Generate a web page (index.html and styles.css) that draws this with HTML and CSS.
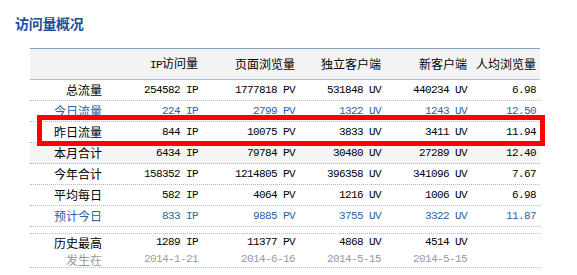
FILE: index.html
```html
<!DOCTYPE html>
<html lang="zh">
<head>
<meta charset="utf-8">
<title>访问量概况</title>
<link rel="stylesheet" href="styles.css">
</head>
<body>
<div class="page">
  <h2 class="title">访问量概况</h2>
  <div class="stats">
    <div class="row head">
      <div class="c"></div>
      <div class="c"><span class="m">IP</span>访问量</div>
      <div class="c">页面浏览量</div>
      <div class="c">独立客户端</div>
      <div class="c">新客户端</div>
      <div class="c">人均浏览量</div>
    </div>
    <div class="row">
      <div class="c lab">总流量</div>
      <div class="c m">254582 IP</div>
      <div class="c m">1777818 PV</div>
      <div class="c m">531848 UV</div>
      <div class="c m">440234 UV</div>
      <div class="c m">6.98</div>
    </div>
    <div class="row blue">
      <div class="c lab">今日流量</div>
      <div class="c m">224 IP</div>
      <div class="c m">2799 PV</div>
      <div class="c m">1322 UV</div>
      <div class="c m">1243 UV</div>
      <div class="c m">12.50</div>
    </div>
    <div class="row">
      <div class="c lab">昨日流量</div>
      <div class="c m">844 IP</div>
      <div class="c m">10075 PV</div>
      <div class="c m">3833 UV</div>
      <div class="c m">3411 UV</div>
      <div class="c m">11.94</div>
    </div>
    <div class="row shade">
      <div class="c lab">本月合计</div>
      <div class="c m">6434 IP</div>
      <div class="c m">79784 PV</div>
      <div class="c m">30480 UV</div>
      <div class="c m">27289 UV</div>
      <div class="c m">12.40</div>
    </div>
    <div class="row">
      <div class="c lab">今年合计</div>
      <div class="c m">158352 IP</div>
      <div class="c m">1214805 PV</div>
      <div class="c m">396358 UV</div>
      <div class="c m">341096 UV</div>
      <div class="c m">7.67</div>
    </div>
    <div class="row">
      <div class="c lab">平均每日</div>
      <div class="c m">582 IP</div>
      <div class="c m">4064 PV</div>
      <div class="c m">1216 UV</div>
      <div class="c m">1006 UV</div>
      <div class="c m">6.98</div>
    </div>
    <div class="row blue">
      <div class="c lab">预计今日</div>
      <div class="c m">833 IP</div>
      <div class="c m">9885 PV</div>
      <div class="c m">3755 UV</div>
      <div class="c m">3322 UV</div>
      <div class="c m">11.87</div>
    </div>
    <div class="row spacer"></div>
    <div class="row peak">
      <div class="c lab"><div>历史最高</div><div class="gray">发生在</div></div>
      <div class="c m"><div>1289 IP</div><div class="gray">2014-1-21</div></div>
      <div class="c m"><div>11377 PV</div><div class="gray">2014-6-16</div></div>
      <div class="c m"><div>4868 UV</div><div class="gray">2014-5-15</div></div>
      <div class="c m"><div>4514 UV</div><div class="gray">2014-5-15</div></div>
      <div class="c m"></div>
    </div>
    <div class="mark"></div>
  </div>
</div>
</body>
</html>
```

FILE: styles.css
```css
html, body {
  margin: 0;
  padding: 0;
  background: #fff;
}
body {
  font-family: "Noto Sans CJK SC", "Liberation Sans", sans-serif;
  font-size: 12px;
  color: #000;
}
.page {
  padding: 15px 0 0 15px;
}
.title {
  margin: 0;
  font-size: 14px;
  line-height: 16px;
  font-weight: bold;
  color: #1d4f9c;
  letter-spacing: -0.3px;
}
.stats {
  position: relative;
  margin: 17px 0 0 15px;
  width: 510px;
  border-top: 1px solid #86a3c6;
}
.row {
  display: grid;
  grid-template-columns: 76px 96px 97px 86px 86px 69px;
  height: 20px;
  align-items: center;
  border-bottom: 1px dotted #b8b8b8;
}
.row.head {
  height: 30px;
  background: #f3f3f3;
  border-bottom: 1px solid #a9bfdb;
}
.c {
  text-align: right;
  padding-right: 4px;
  white-space: nowrap;
  line-height: 16px;
}
.m {
  font-family: "Liberation Mono", monospace;
  font-size: 11px;
  letter-spacing: -0.6px;
}
.lab {
  font-family: "Noto Sans CJK SC", sans-serif;
  font-size: 12px;
  letter-spacing: 0;
}
.blue .c {
  color: #2a62a4;
}
.shade {
  background: #f5f5f5;
}
.spacer {
  height: 6px;
}
.peak {
  height: 33px;
  align-items: start;
}
.peak .c div {
  line-height: 17px;
}
.gray {
  color: #9a9a9a;
}
.mark {
  position: absolute;
  left: 7px;
  top: 66px;
  width: 498px;
  height: 21px;
  border: 5px solid #ff0000;
}
```
